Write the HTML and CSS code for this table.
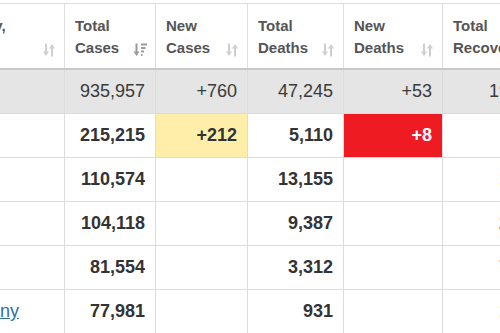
FILE: index.html
```html
<!DOCTYPE html>
<html>
<head>
<meta charset="utf-8">
<link rel="stylesheet" href="styles.css">
</head>
<body>
<div class="wrap">
<table class="tbl">
  <colgroup>
    <col class="c1"><col class="c2"><col class="c3"><col class="c4"><col class="c5"><col class="c6">
  </colgroup>
  <thead>
    <tr>
      <th><div class="hd"><span>Country,<br>Other</span><svg class="sort" viewBox="0 0 14 13"><use href="#both"/></svg></div></th>
      <th><div class="hd"><span>Total<br>Cases</span><svg class="sort active" viewBox="0 0 14 13"><use href="#desc"/></svg></div></th>
      <th><div class="hd"><span>New<br>Cases</span><svg class="sort" viewBox="0 0 14 13"><use href="#both"/></svg></div></th>
      <th><div class="hd"><span>Total<br>Deaths</span><svg class="sort" viewBox="0 0 14 13"><use href="#both"/></svg></div></th>
      <th><div class="hd"><span>New<br>Deaths</span><svg class="sort" viewBox="0 0 14 13"><use href="#both"/></svg></div></th>
      <th><div class="hd"><span>Total<br>Recovered</span><svg class="sort" viewBox="0 0 14 13"><use href="#both"/></svg></div></th>
    </tr>
  </thead>
  <tbody>
    <tr class="total">
      <td class="name">Total:</td><td>935,957</td><td>+760</td><td>47,245</td><td>+53</td><td>193,177</td>
    </tr>
    <tr>
      <td class="name">USA</td><td>215,215</td><td class="newc">+212</td><td>5,110</td><td class="newd">+8</td><td>8,878</td>
    </tr>
    <tr>
      <td class="name">Italy</td><td>110,574</td><td></td><td>13,155</td><td></td><td>16,847</td>
    </tr>
    <tr>
      <td class="name">Spain</td><td>104,118</td><td></td><td>9,387</td><td></td><td>22,647</td>
    </tr>
    <tr>
      <td class="name">China</td><td>81,554</td><td></td><td>3,312</td><td></td><td>76,571</td>
    </tr>
    <tr>
      <td class="name"><a href="#">Germany</a></td><td>77,981</td><td></td><td>931</td><td></td><td>16,100</td>
    </tr>
  </tbody>
</table>
</div>
<svg class="defs" width="0" height="0">
  <defs>
    <g id="both">
      <path d="M4 0V10" stroke-width="2"/>
      <path d="M1 8H7L4 12.5Z" stroke="none"/>
      <path d="M10 13V3" stroke-width="2"/>
      <path d="M7 5H13L10 0.5Z" stroke="none"/>
    </g>
    <g id="desc">
      <path d="M3.5 0V10" stroke-width="2"/>
      <path d="M0.5 8H6.5L3.5 12.5Z" stroke="none"/>
      <path d="M8 1H14M8 4.5H12.5M8 8H11M8 11.5H9.5" stroke-width="1.8"/>
    </g>
  </defs>
</svg>
</body>
</html>
```
FILE: styles.css
```css
html, body {
  margin: 0;
  padding: 0;
  background: #fff;
}
.wrap {
  width: 500px;
  height: 333px;
  overflow: hidden;
  padding-top: 3px;
  box-sizing: border-box;
}
.tbl {
  margin-left: -66px;
  border-collapse: collapse;
  table-layout: fixed;
  width: 630px;
  font-family: "Liberation Sans", Arial, sans-serif;
}
.c1 { width: 130px; }
.c2 { width: 91px; }
.c3 { width: 92px; }
.c4 { width: 96px; }
.c5 { width: 99px; }
.c6 { width: 122px; }
.tbl th {
  border: 1px solid #dedede;
  border-bottom: 2px solid #c8c8c8;
  padding: 11px 8px 9px 10px;
  text-align: left;
  font-size: 15px;
  line-height: 22px;
  font-weight: bold;
  color: #555;
  white-space: nowrap;
  overflow: hidden;
}
.hd {
  display: flex;
  align-items: flex-end;
  justify-content: space-between;
}
.sort {
  width: 14px;
  height: 14px;
  flex: none;
  margin-bottom: 2px;
  fill: #cfcfcf;
  stroke: #cfcfcf;
}
.sort.active {
  fill: #999;
  stroke: #999;
}
.tbl td {
  border: 1px solid #dcdcdc;
  padding: 10px 10px;
  line-height: 23px;
  font-size: 18px;
  font-weight: bold;
  color: #333;
  text-align: right;
  white-space: nowrap;
  overflow: hidden;
}
.tbl td.name {
  text-align: left;
  font-weight: normal;
}
.tbl tr.total td {
  background: #e5e5e5;
  font-weight: normal;
  color: #3a3a3a;
}
.tbl td.newc {
  background: #ffeeaa;
}
.tbl td.newd {
  background: #ef1b23;
  color: #fff;
}
.name a {
  color: #2f6ea8;
  text-decoration: underline;
}
.defs {
  position: absolute;
  width: 0;
  height: 0;
}
```
